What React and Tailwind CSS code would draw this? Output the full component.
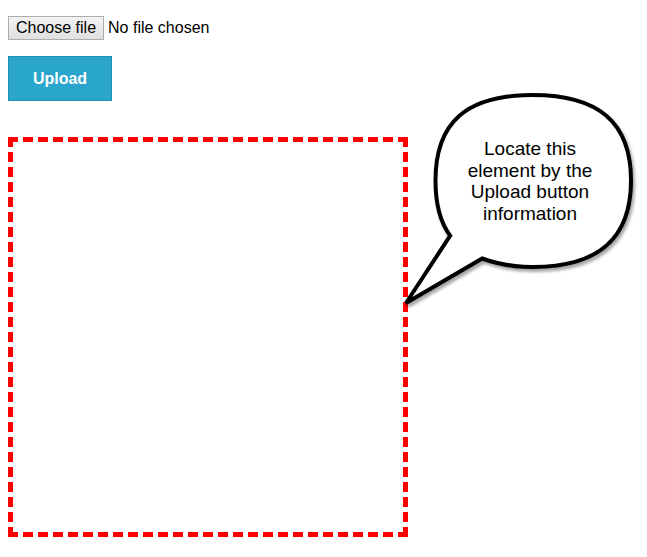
import { useState } from 'react';

const SpeechBubble = () => (
  <div className="absolute left-[400px] top-[88px] w-[240px] h-[225px]">
    <svg width="240" height="225" viewBox="0 0 240 225" className="absolute inset-0">
      <defs>
        <filter id="bubble-shadow" x="-10%" y="-10%" width="130%" height="130%">
          <feDropShadow dx="2" dy="3" stdDeviation="1.8" floodColor="#000" floodOpacity="0.35" />
        </filter>
      </defs>
      <path
        d="M 132.5 7 C 198.8 7 231 34.4 231 92.5 C 231 150.6 198.8 179 132.5 179 C 112.6 179 95.9 175.5 82.2 170.5 L 6 215 L 50.2 147.7 C 40 134.1 35.5 115.7 35.5 92.5 C 35.5 34.4 66.2 7 132.5 7 Z"
        fill="#fff"
        stroke="#000"
        strokeWidth="4"
        strokeLinejoin="miter"
        filter="url(#bubble-shadow)"
      />
    </svg>
    <div className="absolute left-[40px] top-[50px] w-[180px] text-center text-[19px] leading-[21.6px] text-black">
      Locate this
      <br />
      element by the
      <br />
      Upload button
      <br />
      information
    </div>
  </div>
);

export default function App() {
  const [fileName, setFileName] = useState('');

  return (
    <div className="relative min-h-[557px] bg-white p-[8px] font-['Liberation_Sans',Arial,sans-serif] text-[16px] text-black">
      <div className="mt-[8px] flex items-center h-[24px]">
        <label className="flex items-center cursor-default">
          <span className="h-[24px] px-[7px] flex items-center border border-[#adadad] bg-linear-to-b from-[#f3f3f3] to-[#e0e0e0] text-black">
            Choose file
          </span>
          <span className="ml-[4px]">{fileName || 'No file chosen'}</span>
          <input
            type="file"
            className="hidden"
            onChange={(e) => setFileName(e.target.files[0]?.name || '')}
          />
        </label>
      </div>

      <button className="mt-[16px] block w-[104px] h-[45px] bg-[#2aa6cc] border border-[#1f8fb3] text-white font-bold text-[16px]">
        Upload
      </button>

      <div className="mt-[36px] w-[400px] h-[400px] border-[5px] border-dashed border-[#ff0000]" />

      <SpeechBubble />
    </div>
  );
}
